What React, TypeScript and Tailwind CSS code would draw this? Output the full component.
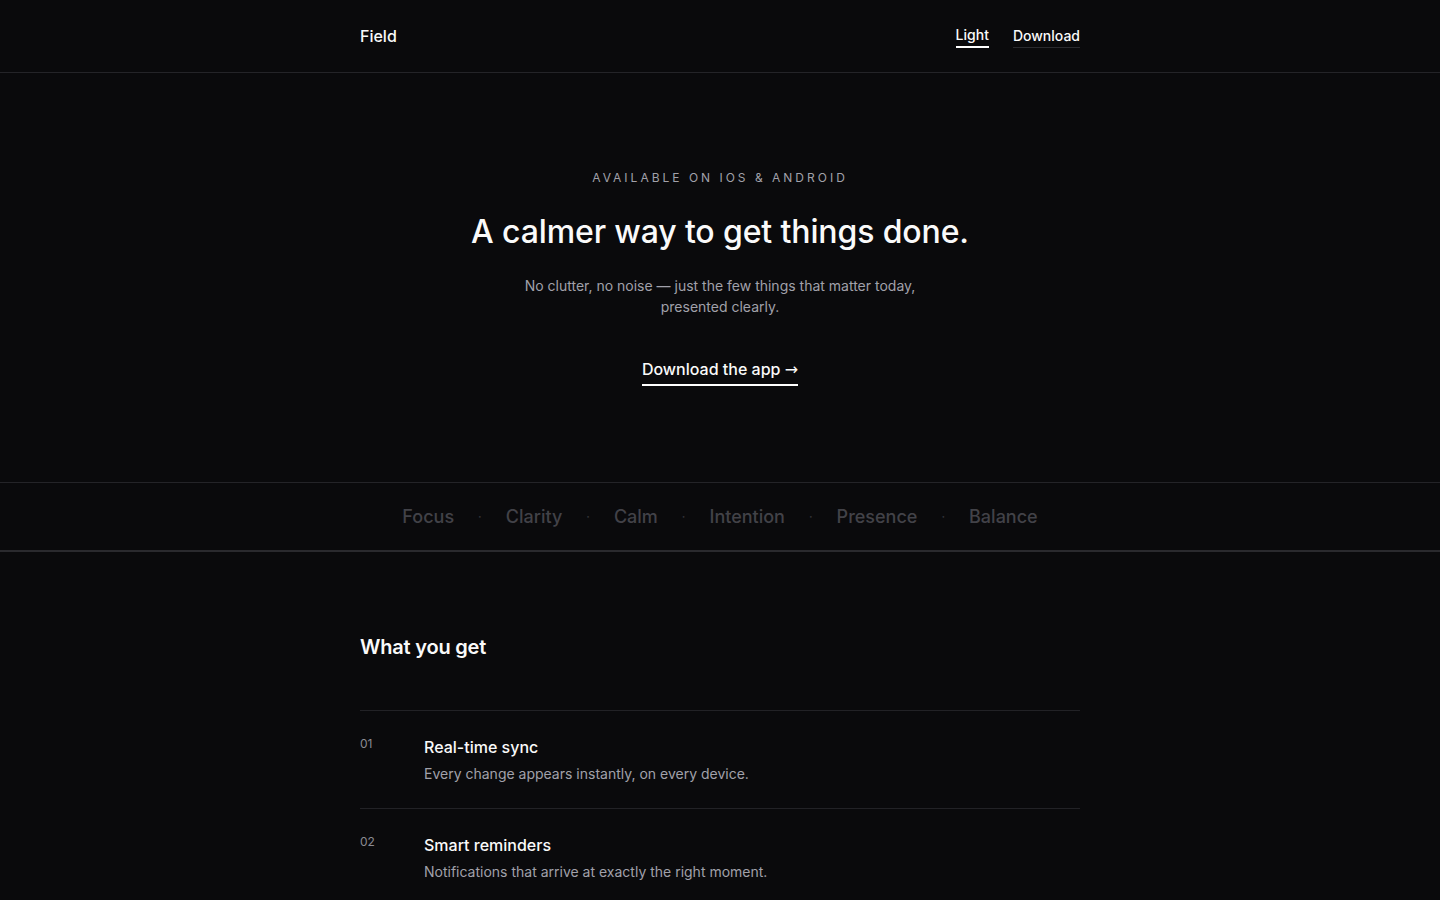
import React from "react";

const words = ["Focus", "Clarity", "Calm", "Intention", "Presence", "Balance"];

const features = [
  { n: "01", title: "Real-time sync", desc: "Every change appears instantly, on every device." },
  { n: "02", title: "Smart reminders", desc: "Notifications that arrive at exactly the right moment." },
  { n: "03", title: "Quiet mode", desc: "Hide everything except what you are working on now." },
];

export default function App() {
  return (
    <div className="min-h-screen bg-[#0a0a0c] text-[#fafafa] font-['Inter','Noto_Sans',sans-serif]">
      {/* Header */}
      <header className="border-b border-[#242428]">
        <div className="mx-auto flex h-[72px] w-[720px] items-center justify-between">
          <span className="text-base font-medium">Field</span>
          <nav className="flex items-center gap-6 text-sm font-medium">
            <button className="border-b-2 border-white pb-[1px] leading-5">Light</button>
            <a href="#" className="mt-[2px] border-b border-[#2a2a2e] pb-[1px] leading-5">
              Download
            </a>
          </nav>
        </div>
      </header>

      {/* Hero */}
      <section className="flex flex-col items-center pt-[97px] pb-[96px] text-center">
        <p className="text-xs uppercase tracking-[0.25em] text-[#a1a1aa] leading-4">
          Available on iOS &amp; Android
        </p>
        <h1 className="mt-[26px] text-[32px] font-medium leading-10 tracking-[-0.004em]">
          A calmer way to get things done.
        </h1>
        <p className="mt-[23px] max-w-[400px] text-sm leading-[21px] text-[#a1a1aa]">
          No clutter, no noise — just the few things that matter today, presented clearly.
        </p>
        <a
          href="#"
          className="mt-[40px] border-b-2 border-white pb-[2px] text-base font-medium leading-6"
        >
          Download the app <span className="font-['DejaVu_Sans',sans-serif]">→</span>
        </a>
      </section>

      {/* Marquee */}
      <div className="border-t border-[#242428] border-b-2 border-b-[#2a2a2e]">
        <div className="flex h-[67px] items-center justify-center gap-6 text-lg font-medium text-[#424248]">
          {words.map((w, i) => (
            <React.Fragment key={w}>
              {i > 0 && <span className="text-xs text-[#333338]">·</span>}
              <span>{w}</span>
            </React.Fragment>
          ))}
        </div>
      </div>

      {/* Features */}
      <section className="mx-auto w-[720px] pt-[81px] pb-24">
        <h2 className="mb-[49px] text-xl font-semibold leading-7 tracking-[-0.01em]">What you get</h2>
        <div>
          {features.map((f) => (
            <div key={f.n} className="flex border-t border-[#222226] pt-6 pb-6">
              <span className="w-16 shrink-0 pt-[1px] text-xs leading-4 text-[#8a8a93]">{f.n}</span>
              <div>
                <h3 className="text-base font-medium leading-6">{f.title}</h3>
                <p className="mt-[5px] text-sm leading-5 text-[#a1a1aa]">{f.desc}</p>
              </div>
            </div>
          ))}
        </div>
      </section>
    </div>
  );
}
